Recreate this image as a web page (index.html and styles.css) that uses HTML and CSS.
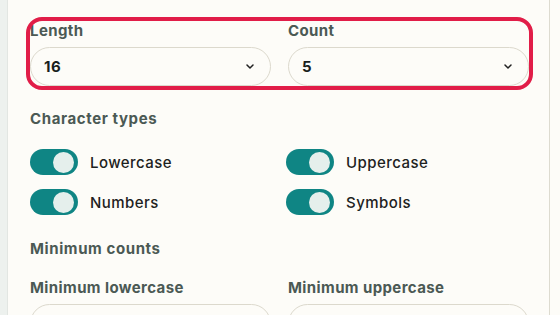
FILE: index.html
```html
<!DOCTYPE html>
<html>
<head>
<meta charset="utf-8">
<link rel="stylesheet" href="styles.css">
</head>
<body>
<div class="layout">
  <div class="rail"></div>
  <main class="panel">
    <div class="field-group">
      <div class="field">
        <label class="label">Length</label>
        <div class="select"><span class="value">16</span>
          <svg class="chev" width="8" height="5" viewBox="0 0 8 5"><path d="M1 1l3 3 3-3" fill="none" stroke="#222" stroke-width="1.5" stroke-linecap="round" stroke-linejoin="round"/></svg>
        </div>
      </div>
      <div class="field">
        <label class="label">Count</label>
        <div class="select"><span class="value">5</span>
          <svg class="chev" width="8" height="5" viewBox="0 0 8 5"><path d="M1 1l3 3 3-3" fill="none" stroke="#222" stroke-width="1.5" stroke-linecap="round" stroke-linejoin="round"/></svg>
        </div>
      </div>
    </div>

    <h3 class="section">Character types</h3>
    <div class="toggles">
      <div class="toggle-row"><span class="switch"><span class="knob"></span></span><span class="tlabel">Lowercase</span></div>
      <div class="toggle-row"><span class="switch"><span class="knob"></span></span><span class="tlabel">Uppercase</span></div>
      <div class="toggle-row"><span class="switch"><span class="knob"></span></span><span class="tlabel">Numbers</span></div>
      <div class="toggle-row"><span class="switch"><span class="knob"></span></span><span class="tlabel">Symbols</span></div>
    </div>

    <h3 class="section section-min">Minimum counts</h3>
    <div class="grid2">
      <div class="field">
        <label class="label">Minimum lowercase</label>
        <div class="input"></div>
      </div>
      <div class="field">
        <label class="label">Minimum uppercase</label>
        <div class="input"></div>
      </div>
    </div>
  </main>
</div>
</body>
</html>
```

FILE: styles.css
```css
* { box-sizing: border-box; }
html, body { margin: 0; padding: 0; }
body {
  background: #fdfcf8;
  font-family: Inter, "Noto Sans", sans-serif;
  color: #1d2221;
  height: 315px;
  overflow: hidden;
}
.layout {
  display: flex;
  height: 315px;
}
.rail {
  width: 8px;
  flex: none;
  background: #edf1ee;
  border-right: 1px solid #e2e6e2;
}
.panel {
  width: 542px;
  flex: none;
  border-right: 1px solid #dddbd0;
  padding: 21px 20px 0 22px;
}
.field-group {
  display: grid;
  grid-template-columns: 241px 241px;
  column-gap: 17px;
  border-radius: 12px;
  outline: 4px solid #e11d48;
  outline-offset: 0;
}
.field {
  display: flex;
  flex-direction: column;
  gap: 6px;
}
.label {
  font-size: 15px;
  font-weight: 700;
  line-height: 20px;
  letter-spacing: 0.4px;
  color: #4b5954;
}
.select {
  height: 39px;
  border: 1px solid #dcd9cd;
  border-radius: 20px;
  background: #fdfcf8;
  display: flex;
  align-items: center;
  justify-content: space-between;
  padding: 0 16px 0 13px;
}
.value {
  font-size: 15px;
  font-weight: 700;
  letter-spacing: 0.5px;
  color: #1a1f1e;
}
.chev { display: block; }
.section {
  margin: 23px 0 0;
  font-size: 15px;
  font-weight: 700;
  line-height: 20px;
  letter-spacing: 0.6px;
  color: #4b5954;
}
.toggles {
  margin-top: 20px;
  display: grid;
  grid-template-columns: 244px 244px;
  column-gap: 12px;
  row-gap: 14px;
}
.toggle-row {
  display: flex;
  align-items: center;
  gap: 12px;
}
.switch {
  width: 48px;
  height: 26px;
  border-radius: 13px;
  background: #0f8584;
  display: flex;
  align-items: center;
  justify-content: flex-end;
  padding-right: 4px;
}
.knob {
  width: 21px;
  height: 21px;
  border-radius: 50%;
  background: #e5efec;
}
.tlabel {
  font-size: 15px;
  font-weight: 500;
  letter-spacing: 0.45px;
  color: #1d2221;
}
.section-min { margin-top: 24px; }
.grid2 {
  margin-top: 19px;
  display: grid;
  grid-template-columns: 241px 241px;
  column-gap: 17px;
}
.input {
  height: 39px;
  border: 1px solid #dcd9cd;
  border-radius: 20px;
  background: #fdfcf8;
}
```
